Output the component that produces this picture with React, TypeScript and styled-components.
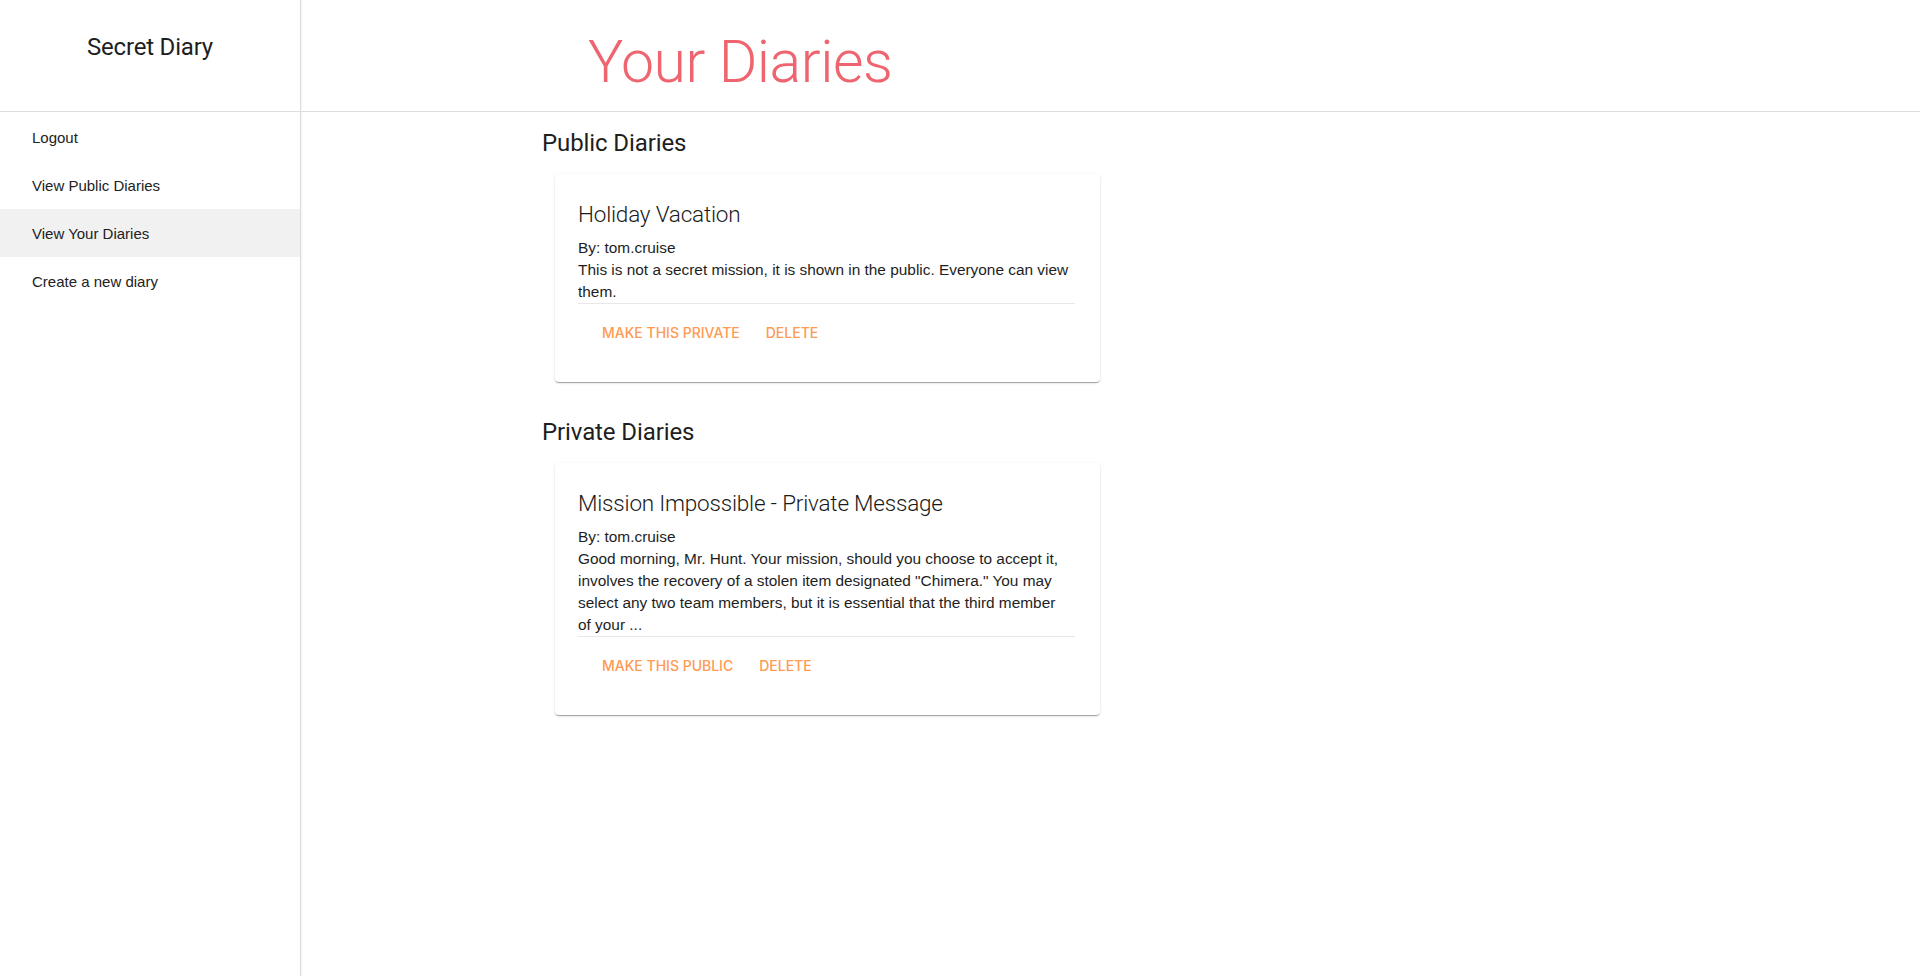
import React from "react";
import styled, { createGlobalStyle } from "styled-components";

interface Diary {
  id: number;
  title: string;
  author: string;
  body: string;
  isPublic: boolean;
}

const diaries: Diary[] = [
  {
    id: 1,
    title: "Holiday Vacation",
    author: "tom.cruise",
    body: "This is not a secret mission, it is shown in the public. Everyone can view them.",
    isPublic: true,
  },
  {
    id: 2,
    title: "Mission Impossible - Private Message",
    author: "tom.cruise",
    body:
      'Good morning, Mr. Hunt. Your mission, should you choose to accept it, involves the recovery of a stolen item designated "Chimera." You may select any two team members, but it is essential that the third member of your ...',
    isPublic: false,
  },
];

const navItems = ["Logout", "View Public Diaries", "View Your Diaries", "Create a new diary"];

const GlobalStyle = createGlobalStyle`
  html, body {
    margin: 0;
    padding: 0;
    background: #fff;
  }
  body {
    font-family: "Liberation Sans", Arial, Helvetica, sans-serif;
    color: rgba(0, 0, 0, 0.87);
    -webkit-font-smoothing: antialiased;
  }
  * {
    box-sizing: border-box;
  }
`;

const Layout = styled.div`
  display: flex;
  min-height: 100vh;
`;

const Sidebar = styled.aside`
  width: 301px;
  flex-shrink: 0;
  border-right: 1px solid #dcdcdc;
  box-shadow: 1px 0 2px rgba(0, 0, 0, 0.05);
  display: flex;
  flex-direction: column;
`;

const Brand = styled.div`
  height: 112px;
  border-bottom: 1px solid #dedede;
  display: flex;
  justify-content: center;
  padding-top: 33px;
  font-family: Roboto, "Liberation Sans", sans-serif;
  font-size: 24px;
  font-weight: 400;
  color: #1e1e1e;
  letter-spacing: -0.2px;
`;

const NavList = styled.nav`
  display: flex;
  flex-direction: column;
  padding-top: 1px;
`;

const NavItem = styled.div<{ active?: boolean }>`
  height: 48px;
  display: flex;
  align-items: center;
  padding-left: 32px;
  font-size: 15px;
  color: #222;
  background: ${({ active }) => (active ? "#f1f1f1" : "transparent")};
`;

const Main = styled.main`
  flex: 1;
  display: flex;
  flex-direction: column;
`;

const Header = styled.header`
  height: 112px;
  border-bottom: 1px solid #dedede;
  padding-left: 287px;
  padding-top: 27px;
`;

const PageTitle = styled.h1`
  margin: 0;
  font-family: Roboto, "Liberation Sans", sans-serif;
  font-size: 59px;
  line-height: 1.2;
  font-weight: 300;
  letter-spacing: -0.5px;
  color: #ee6570;
`;

const Content = styled.div`
  padding-left: 241px;
  padding-top: 16px;
  display: flex;
  flex-direction: column;
`;

const Section = styled.section`
  display: flex;
  flex-direction: column;
  margin-bottom: 35px;
`;

const SectionTitle = styled.h2`
  margin: 0 0 16px;
  font-family: Roboto, "Liberation Sans", sans-serif;
  font-size: 24px;
  line-height: 30px;
  font-weight: 400;
  color: #1e1e1e;
  letter-spacing: -0.1px;
`;

const Card = styled.div`
  width: 545px;
  margin-left: 13px;
  background: #fff;
  border-radius: 4px;
  box-shadow: 0px 2px 1px -1px rgba(0, 0, 0, 0.2), 0px 1px 1px 0px rgba(0, 0, 0, 0.14),
    0px 1px 3px 0px rgba(0, 0, 0, 0.12);
  padding: 26px 25px 32px 23px;
`;

const CardTitle = styled.h3`
  margin: 0 0 9px;
  font-family: Roboto, "Liberation Sans", sans-serif;
  font-size: 22.5px;
  line-height: 28px;
  font-weight: 300;
  color: #1a1a1a;
  letter-spacing: -0.2px;
`;

const CardText = styled.p`
  margin: 0;
  padding-right: 5px;
  font-size: 15.4px;
  line-height: 22px;
  color: #1e1e1e;
`;

const CardBody = styled.div`
  border-bottom: 1px solid #e8e8e8;
`;

const Actions = styled.div`
  display: flex;
  gap: 10px;
  padding: 10px 0 0 16px;
`;

const ActionButton = styled.button`
  border: none;
  background: none;
  padding: 0 8px;
  height: 36px;
  font-family: Inter, Roboto, sans-serif;
  font-size: 14px;
  font-weight: 500;
  text-transform: uppercase;
  color: #ff9a52;
  cursor: pointer;
`;

const DiaryCard: React.FC<{ diary: Diary }> = ({ diary }) => (
  <Card>
    <CardTitle>{diary.title}</CardTitle>
    <CardBody>
      <CardText>By: {diary.author}</CardText>
      <CardText>{diary.body}</CardText>
    </CardBody>
    <Actions>
      <ActionButton>{diary.isPublic ? "Make this private" : "Make this public"}</ActionButton>
      <ActionButton>Delete</ActionButton>
    </Actions>
  </Card>
);

const App: React.FC = () => {
  const publicDiaries = diaries.filter((d) => d.isPublic);
  const privateDiaries = diaries.filter((d) => !d.isPublic);
  return (
    <>
      <GlobalStyle />
      <Layout>
        <Sidebar>
          <Brand>Secret Diary</Brand>
          <NavList>
            {navItems.map((item) => (
              <NavItem key={item} active={item === "View Your Diaries"}>
                {item}
              </NavItem>
            ))}
          </NavList>
        </Sidebar>
        <Main>
          <Header>
            <PageTitle>Your Diaries</PageTitle>
          </Header>
          <Content>
            <Section>
              <SectionTitle>Public Diaries</SectionTitle>
              {publicDiaries.map((d) => (
                <DiaryCard key={d.id} diary={d} />
              ))}
            </Section>
            <Section>
              <SectionTitle>Private Diaries</SectionTitle>
              {privateDiaries.map((d) => (
                <DiaryCard key={d.id} diary={d} />
              ))}
            </Section>
          </Content>
        </Main>
      </Layout>
    </>
  );
};

export default App;
